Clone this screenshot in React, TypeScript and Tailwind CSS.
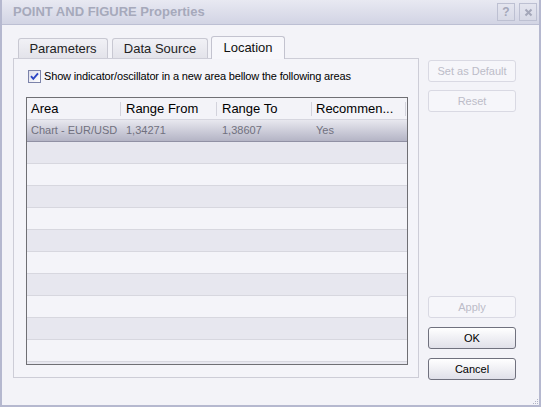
import clsx from "clsx";

const cols = [
  { title: "Area", w: "w-[93px]", value: "Chart - EUR/USD", pl: "pl-[4px]" },
  { title: "Range From", w: "w-[95px]", value: "1,34271", pl: "pl-[5px]" },
  { title: "Range To", w: "w-[94px]", value: "1,38607", pl: "pl-[5px]" },
  { title: "Recommen...", w: "w-[93px]", value: "Yes", pl: "pl-[4px]" },
];

function Btn({ label, disabled, className }: { label: string; disabled?: boolean; className?: string }) {
  return (
    <div
      className={clsx(
        "h-[22px] w-[88px] flex items-center justify-center rounded-[3px] border text-[11px]",
        disabled
          ? "border-[#d9d9e3] bg-[#f6f6fa] text-[#bcbcc8]"
          : "border-[#70717e] bg-linear-to-b from-white to-[#e0e0e9] text-black",
        className
      )}
    >
      {label}
    </div>
  );
}

function Tab({ label, active, className }: { label: string; active?: boolean; className?: string }) {
  return (
    <div
      className={clsx(
        "flex items-center justify-center border border-b-0 rounded-t-[3px] text-[13px]",
        active
          ? "h-[23px] -mb-px z-10 bg-[#f7f7fb] border-[#c3c3cf] text-[#111]"
          : "h-[20px] bg-linear-to-b from-[#f1f1f6] to-[#e3e3ea] border-[#c8c8d2] text-[#222]",
        className
      )}
    >
      {label}
    </div>
  );
}

export default function App() {
  const rows = Array.from({ length: 11 });

  return (
    <div className="relative w-[541px] h-[407px] overflow-hidden bg-[#f3f3f8] border-2 border-t-0 border-[#b5b8cf] font-['Liberation_Sans',Arial,sans-serif]">
      {/* title bar */}
      <div className="h-[25px] flex items-center justify-between pl-[11px] pr-[2px] bg-linear-to-b from-[#e8e9f2] to-[#d2d4e4] border-b border-[#bcbfd3]">
        <span className="text-[13px] font-bold text-[#a6a9bb]">POINT AND FIGURE Properties</span>
        <div className="flex gap-[4px]">
          <div className="w-[18px] h-[18px] flex items-center justify-center border border-[#bdc0d2] bg-linear-to-b from-[#e4e5ef] to-[#d7d9e6] text-[12px] font-bold text-[#a4a7b9]">
            ?
          </div>
          <div className="w-[18px] h-[18px] flex items-center justify-center border border-[#bdc0d2] bg-linear-to-b from-[#e4e5ef] to-[#d7d9e6]">
            <svg width="9" height="9" viewBox="0 0 9 9">
              <path d="M1.5 1.5 L7.5 7.5 M7.5 1.5 L1.5 7.5" stroke="#a4a7b9" strokeWidth="2" />
            </svg>
          </div>
        </div>
      </div>

      {/* body */}
      <div className="flex pt-[11px] pl-[11px]">
        <div className="flex flex-col">
          <div className="h-[22px] flex items-end pl-[5px]">
            <Tab label="Parameters" className="w-[90px]" />
            <Tab label="Data Source" className="w-[96px] ml-[4px]" />
            <Tab label="Location" active className="w-[74px] ml-[3px]" />
          </div>

          <div className="w-[406px] h-[320px] border border-[#cdcdd7] bg-[#f4f4f9] pt-[11px]">
            <div className="flex items-center ml-[14px] h-[13px]">
              <svg width="13" height="13" viewBox="0 0 13 13">
                <defs>
                  <linearGradient id="cb" x1="0" y1="0" x2="1" y2="1">
                    <stop offset="0" stopColor="#dcdcea" />
                    <stop offset="1" stopColor="#ffffff" />
                  </linearGradient>
                </defs>
                <rect x="0.5" y="0.5" width="12" height="12" fill="url(#cb)" stroke="#7c83aa" />
                <path d="M3 6.2 L5.3 8.8 L10 3.3" fill="none" stroke="#2c45c4" strokeWidth="1.9" />
              </svg>
              <span className="ml-[3px] text-[11px] tracking-[-0.15px] text-black">
                Show indicator/oscillator in a new area bellow the following areas
              </span>
            </div>

            <div className="ml-[12px] mt-[14px] w-[382px] h-[268px] border border-[#6f6f74] overflow-hidden bg-[#f3f3f8]">
              <div className="h-[22px] flex border-b border-[#d6d6df]">
                {cols.map((c) => (
                  <div key={c.title} className="flex items-center">
                    <div className={clsx(c.w, c.pl, "text-[13px] text-black whitespace-nowrap overflow-hidden")}>
                      {c.title}
                    </div>
                    <div className="w-px h-[14px] bg-[#d3d3dc]" />
                  </div>
                ))}
              </div>

              <div className="h-[22px] flex items-center border-b border-[#9191a4] bg-linear-to-b from-[#e8e8ef] to-[#b4b4c5]">
                {cols.map((c) => (
                  <div key={c.title} className={clsx(c.w, c.pl, "mr-px text-[11px] text-[#70707e] whitespace-nowrap")}>
                    {c.value}
                  </div>
                ))}
              </div>

              {rows.map((_, i) => (
                <div
                  key={i}
                  className={clsx(
                    "h-[22px] border-b border-[#d7d7df]",
                    i % 2 === 0 ? "bg-[#e7e7ef]" : "bg-[#f4f4f9]"
                  )}
                />
              ))}
            </div>
          </div>
        </div>

        <div className="flex flex-col ml-[9px] mt-[24px]">
          <Btn label="Set as Default" disabled />
          <Btn label="Reset" disabled className="mt-[8px]" />
          <Btn label="Apply" disabled className="mt-[184px]" />
          <Btn label="OK" className="mt-[9px]" />
          <Btn label="Cancel" className="mt-[9px]" />
        </div>
      </div>

      {/* resize grip */}
      <svg className="absolute right-0 bottom-0" width="6" height="6" viewBox="0 0 6 6">
        <rect x="4" y="0" width="1" height="1" fill="#b0b3c6" />
        <rect x="2" y="2" width="1" height="1" fill="#b0b3c6" />
        <rect x="4" y="2" width="1" height="1" fill="#b0b3c6" />
        <rect x="0" y="4" width="1" height="1" fill="#b0b3c6" />
        <rect x="2" y="4" width="1" height="1" fill="#b0b3c6" />
        <rect x="4" y="4" width="1" height="1" fill="#b0b3c6" />
      </svg>
    </div>
  );
}
